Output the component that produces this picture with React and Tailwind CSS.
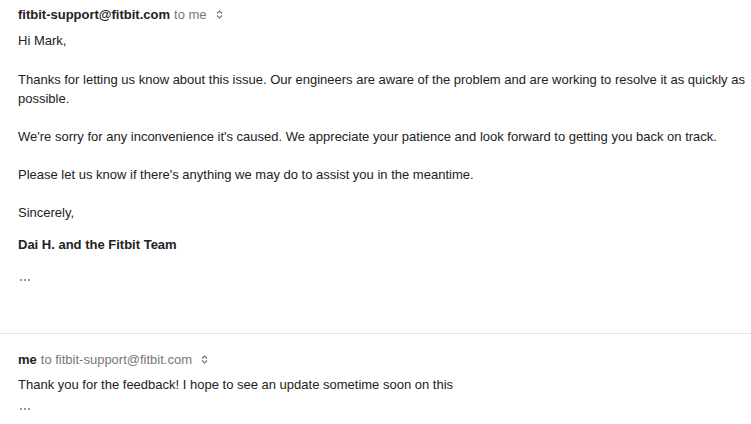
import React from "react";

const UpDown = () => (
  <svg width="7" height="9" viewBox="0 0 7 9" className="inline-block ml-[9px]">
    <path d="M1 3.5 L3.5 1 L6 3.5" stroke="#777" strokeWidth="1.2" fill="none" />
    <path d="M1 5.5 L3.5 8 L6 5.5" stroke="#777" strokeWidth="1.2" fill="none" />
  </svg>
);

const Dots = () => (
  <div className="flex gap-[2px] h-[3px] items-center">
    <span className="w-[2px] h-[2px] bg-[#999]"></span>
    <span className="w-[2px] h-[2px] bg-[#999]"></span>
    <span className="w-[2px] h-[2px] bg-[#999]"></span>
  </div>
);

const App = () => {
  return (
    <div
      className="w-[751px] h-[424px] bg-white overflow-hidden text-[13px] leading-[19px] text-[#222]"
      style={{ fontFamily: "Arial, 'Liberation Sans', sans-serif" }}
    >
      <section className="pl-[18px] pt-[5px]">
        <header className="flex items-center h-[19px]">
          <span className="font-bold">fitbit-support@fitbit.com</span>
          <span className="text-[#777] ml-[4px]">to me</span>
          <UpDown />
        </header>
        <div className="mt-[7px] space-y-[19px]">
          <p>Hi Mark,</p>
          <p className="whitespace-nowrap !mt-[20px]">
            Thanks for letting us know about this issue. Our engineers are aware of the problem and are working to resolve it as quickly as
            <br />
            possible.
          </p>
          <p>
            We're sorry for any inconvenience it's caused. We appreciate your patience and look forward to getting you back on track.
          </p>
          <p className="!mt-[18px]">Please let us know if there's anything we may do to assist you in the meantime.</p>
          <p>Sincerely,</p>
        </div>
        <p className="font-bold mt-[13px]">Dai H. and the Fitbit Team</p>
        <div className="pl-[2px] mt-[24px]">
          <Dots />
        </div>
      </section>
      <hr className="mt-[52px] border-0 border-t border-[#e5e5e5]" />
      <section className="pl-[18px] pt-[16px]">
        <header className="flex items-center h-[19px]">
          <span className="font-bold">me</span>
          <span className="text-[#777] ml-[4px]">to fitbit-support@fitbit.com</span>
          <UpDown />
        </header>
        <p className="mt-[6px]">Thank you for the feedback! I hope to see an update sometime soon on this</p>
        <div className="pl-[2px] mt-[13px]">
          <Dots />
        </div>
      </section>
    </div>
  );
};

export default App;
